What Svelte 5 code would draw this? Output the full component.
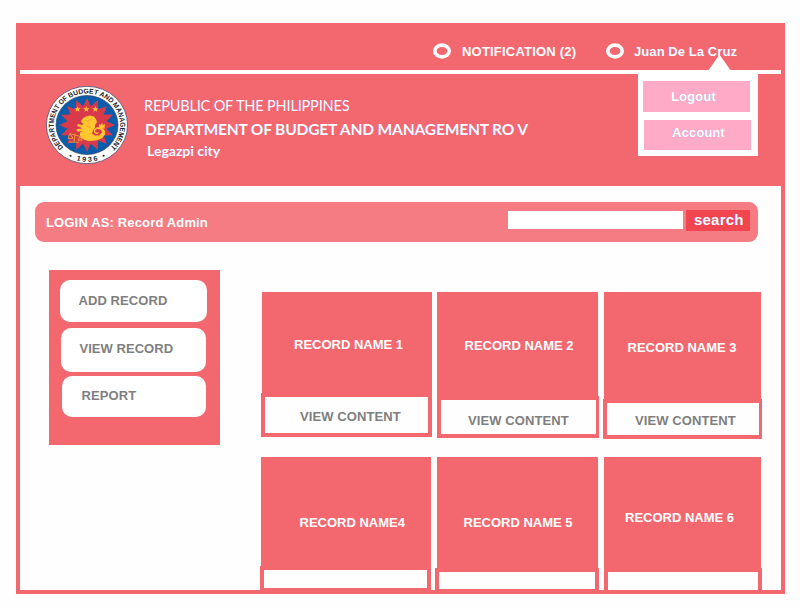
<script>
  const actions = [
    { label: 'ADD RECORD', w: 147, h: 42, x: 11, gap: 6, tx: 18.5, ty: 13, ls: 0.08 },
    { label: 'VIEW RECORD', w: 145, h: 44, x: 12, gap: 4, tx: 18.5, ty: 13, ls: 0.04 },
    { label: 'REPORT', w: 144, h: 41, x: 13, gap: 0, tx: 19.5, ty: 12, ls: 0.1 }
  ];

  const rows = [
    {
      x: 41,
      cards: [
        { name: 'RECORD NAME 1', w: 171, h: 101, l: 1, r: 0, foot: 44, bw: '4px', gap: 5, tx: 32, ty: 45, vx: 35, vy: 12 },
        { name: 'RECORD NAME 2', w: 162, h: 104, l: 0, r: 1, foot: 42, bw: '4px 3px 4px 4px', gap: 4, tx: 27.5, ty: 46, vx: 27, vy: 13 },
        { name: 'RECORD NAME 3', w: 159, h: 107, l: 1, r: 1, foot: 40, bw: '4px 3px 4px 4px', gap: 0, tx: 23.5, ty: 48, vx: 28, vy: 10 }
      ]
    },
    {
      x: 40,
      cards: [
        { name: 'RECORD NAME4', w: 171, h: 109, l: 1, r: 0, foot: 25, bw: '4px 4px 3px 4px', gap: 4, tx: 38.5, ty: 58 },
        { name: 'RECORD NAME 5', w: 164, h: 111, l: 2, r: 1, foot: 25, bw: '4px', gap: 5, tx: 26.5, ty: 58 },
        { name: 'RECORD NAME 6', w: 158, h: 111, l: 0, r: 1, foot: 26, bw: '4px', gap: 0, tx: 21, ty: 53 }
      ]
    }
  ];

  // 16-pointed burst behind the sea-lion
  const burst = Array.from({ length: 32 }, (_, i) => {
    const r = i % 2 ? 20 : 28;
    const a = (i * Math.PI) / 16 - Math.PI / 2;
    return `${(r * Math.cos(a)).toFixed(2)},${(r * Math.sin(a)).toFixed(2)}`;
  }).join(' ');

  const star = Array.from({ length: 10 }, (_, i) => {
    const r = i % 2 ? 1.4 : 3.2;
    const a = (i * Math.PI) / 5 - Math.PI / 2;
    return `${(r * Math.cos(a)).toFixed(2)},${(r * Math.sin(a)).toFixed(2)}`;
  }).join(' ');
</script>

<div class="frame">
  <nav class="topbar">
    <svg class="ring" viewBox="0 0 18 16"><ellipse cx="9" cy="8" rx="7.2" ry="5.9" /></svg>
    <span class="notif">NOTIFICATION (2)</span>
    <svg class="ring" viewBox="0 0 18 16"><ellipse cx="9" cy="8" rx="7.2" ry="5.9" /></svg>
    <span class="user tint">Juan De La Cruz</span>
    <div class="menu">
      <svg class="arrow" viewBox="0 0 24 16"><path d="M0 16 L10.5 1 Q11.5 0 12.5 1 L23 16Z" /></svg>
      <button class="item one">Logout</button>
      <button class="item two">Account</button>
    </div>
  </nav>

  <header class="banner">
    <svg class="seal" viewBox="-42 -42 84 84" preserveAspectRatio="none">
      <circle r="40.6" fill="#fff" stroke="#55597a" stroke-width="0.9" />
      <circle r="31" fill="#0b5cab" stroke="#38415f" stroke-width="0.7" />
      <polygon points={burst} fill="#d8394b" />
      <path id="arcTop" d="M-23.5 23.5 A33.2 33.2 0 1 1 23.5 23.5" fill="none" />
      <path id="arcBottom" d="M-20 33 A38.6 38.6 0 0 0 20 33" fill="none" />
      <text class="ringtext"><textPath href="#arcTop" startOffset="0" textLength="156" lengthAdjust="spacingAndGlyphs">DEPARTMENT OF BUDGET AND MANAGEMENT</textPath></text>
      <text class="ringtext"><textPath href="#arcBottom" startOffset="1.5" textLength="39">• 1936 •</textPath></text>
      <g fill="#ffc62f">
        <polygon points={star} transform="translate(-9.5 -16.5)" />
        <polygon points={star} transform="translate(-0.7 -16.5)" />
        <polygon points={star} transform="translate(8.3 -16.5)" />
        <path d="M-6 -4 L-4 -7 L-1 -9 L3 -10 L7 -9 L9 -6 L10 -3 L8 0 L8 3 L6 6 L5 9 L8 11 L12 11 L15 8 L14 5 L10 4 L8 6 L9 8 L12 8 L10 10 L7 8 L7 5 L10 2 L15 3 L18 6 L18 10 L15 14 L10 16 L2 17 L-4 15 L-7 12 L-7 8 L-4 6 L-9 7 L-11 5 L-8 4 L-5 4 L-7 2 L-10 1 L-9 -1 L-5 0 L-3 -1 L-5 -2Z" />
        <path d="M12 3 L12 -1 L13.5 0 L15 -2 L16 0 L18 -1 L17.5 4Z" />
      </g>
      <path d="M-17 9 L-7 12 M-12 9 L-13 18 M-18 18 H-8 M-17 9 L-19 14 H-14Z M-7 12 L-9 16 H-5Z" fill="none" stroke="#ef9a35" stroke-width="1" />
      <path d="M-2 -5 L1 -4 L4 -6 M0 1 L4 3" fill="none" stroke="#e98b36" stroke-width="0.6" />
    </svg>
    <div class="titles">
      <div class="republic tint">REPUBLIC OF THE PHILIPPINES</div>
      <div class="dept tint">DEPARTMENT OF BUDGET AND MANAGEMENT RO V</div>
      <div class="city tint">Legazpi city</div>
    </div>
  </header>

  <section class="loginbar">
    <span class="login">LOGIN AS: Record Admin</span>
    <input type="text" aria-label="Search records" />
    <button class="search">search</button>
  </section>

  <main>
    <aside>
      {#each actions as a}
        <button
          class="action"
          style="width:{a.w}px;height:{a.h}px;margin:0 0 {a.gap}px {a.x}px;padding:{a.ty}px 0 0 {a.tx}px;letter-spacing:{a.ls}px"
        >{a.label}</button>
      {/each}
    </aside>
    <div class="records">
      {#each rows as row}
        <div class="row" style="margin-left:{row.x}px">
          {#each row.cards as c}
            <article style="width:{c.w}px;margin-right:{c.gap}px">
              <div class="name" style="height:{c.h}px;margin:0 {c.r}px 0 {c.l}px;padding:{c.ty}px 0 0 {c.tx}px">{c.name}</div>
              <div class="foot" style="height:{c.foot}px;border-width:{c.bw}">
                {#if c.vx}<span style="margin:{c.vy}px 0 0 {c.vx}px">VIEW CONTENT</span>{/if}
              </div>
            </article>
          {/each}
        </div>
      {/each}
    </div>
  </main>
</div>

<style>
  :global(body) {
    margin: 0;
    background: #fefefe;
  }
  * {
    box-sizing: border-box;
  }
  .frame {
    width: 769px;
    height: 571px;
    margin: 23px 0 0 16px;
    border: 4px solid #f3686f;
    border-top: 0;
    background: #fefefe;
    font: bold 13px/16px 'Liberation Sans', Arial, sans-serif;
    color: #fff;
  }
  button {
    display: block;
    border: 0;
    padding: 0;
    font: inherit;
    color: inherit;
    text-align: left;
  }
  .tint {
    text-shadow: -0.6px 0 0.4px rgba(125, 85, 225, 0.55);
  }
  .topbar {
    position: relative;
    display: flex;
    align-items: flex-start;
    height: 47px;
    margin: 0 -4px;
    padding-left: 417px;
    background: #f3686f;
    white-space: nowrap;
  }
  .ring {
    flex: none;
    width: 18px;
    height: 16px;
    margin-top: 20px;
    fill: none;
    stroke: #fff;
    stroke-width: 3.6;
  }
  .notif {
    width: 144px;
    margin: 21px 0 0 11px;
    letter-spacing: 0.2px;
  }
  .user {
    margin: 21px 0 0 10px;
    letter-spacing: 0.08px;
  }
  .menu {
    position: absolute;
    z-index: 2;
    left: 622px;
    top: 51px;
    width: 120px;
    height: 82px;
    padding: 7px 0 0 5px;
    background: #fff;
  }
  .arrow {
    position: absolute;
    left: 70px;
    top: -19px;
    width: 24px;
    height: 16px;
    fill: #fff;
  }
  .item {
    width: 107px;
    background: #ffabc8;
    letter-spacing: 0.1px;
    text-shadow: -0.6px 0 0.4px rgba(110, 160, 235, 0.7);
  }
  .one {
    height: 31px;
    padding: 1px 0 0 28px;
  }
  .two {
    height: 30px;
    margin: 8px 0 0 1px;
    padding: 0 0 4px 28px;
  }
  .banner {
    display: flex;
    height: 116px;
    border-top: 4px solid #fff;
    background: #f3686f;
  }
  .seal {
    flex: none;
    width: 84px;
    height: 80px;
    margin: 11px 0 0 25px;
    overflow: visible;
  }
  .ringtext {
    font: bold 7.2px 'Liberation Sans', Arial, sans-serif;
    fill: #20222c;
  }
  .titles {
    padding: 22px 0 0 15px;
    font-family: Lato, 'Open Sans', sans-serif;
    white-space: nowrap;
  }
  .republic {
    font-size: 14.5px;
    font-weight: 400;
    line-height: 20px;
    letter-spacing: -0.16px;
  }
  .dept {
    margin: 3px 0 0 1px;
    font-size: 15.5px;
    line-height: 20px;
    letter-spacing: -0.14px;
  }
  .city {
    margin: 3px 0 0 3px;
    font-size: 14px;
    line-height: 18px;
  }
  .loginbar {
    display: flex;
    height: 40px;
    margin: 16px 23px 0 15px;
    border-radius: 9px;
    background: #f47c82;
  }
  .login {
    width: 461px;
    margin: 13px 0 0 11px;
    letter-spacing: 0.15px;
  }
  input {
    width: 175px;
    height: 18px;
    margin: 9px 3px 0 1px;
    padding: 0;
    border: 0;
    background: #fff;
  }
  .search {
    width: 64px;
    height: 21px;
    margin-top: 8px;
    padding: 0 0 2px 8px;
    background: #f1464f;
    font-size: 15px;
    letter-spacing: 0.2px;
    text-shadow: -0.6px 0 0.4px rgba(90, 60, 225, 0.6);
  }
  main {
    display: flex;
    padding: 28px 0 0 29px;
  }
  aside {
    width: 171px;
    height: 175px;
    padding-top: 10px;
    background: #f3686f;
  }
  .action {
    display: flex;
    align-items: flex-start;
    border-radius: 10px;
    background: #fff;
    color: #7f7f7f;
  }
  .records {
    padding-top: 22px;
    white-space: nowrap;
  }
  .row {
    display: flex;
    align-items: flex-start;
    height: 165px;
  }
  .row:last-child {
    height: 133px;
  }
  article {
    flex: none;
  }
  .name {
    background: #f3686f;
  }
  .foot {
    display: flex;
    border: 0 solid #f3686f;
    background: #fefefe;
    color: #7f7f7f;
    letter-spacing: 0.1px;
  }
</style>
